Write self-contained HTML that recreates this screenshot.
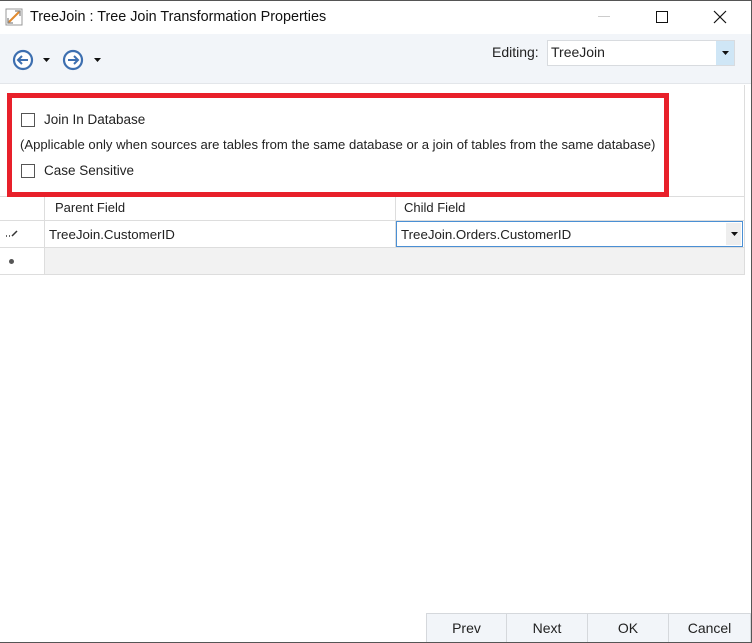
<!DOCTYPE html>
<html><head><meta charset="utf-8"><style>
*{box-sizing:border-box;margin:0;padding:0}
body{width:752px;height:643px;overflow:hidden;background:#fff;font-family:"Liberation Sans",sans-serif;font-size:13px;color:#222;position:relative}
.abs{position:absolute}
.win{position:absolute;left:0;top:0;width:752px;height:643px;border-top:1px solid #555;border-right:1px solid #555;border-bottom:1px solid #666}
.title{left:30px;top:9px;font-size:14.4px;color:#111}
.tb{left:0;top:34px;width:751px;height:50px;background:#f2f5f9;border-bottom:1px solid #e3e6ea}
.cb{width:14px;height:14px;border:1px solid #555;background:#fff}
.btn{top:613px;height:30px;background:#f2f5f9;border:1px solid #d5d8dc;text-align:center;line-height:28px;font-size:14px;color:#222}
</style></head><body>
<div class="win"></div>
<svg class="abs" style="left:5px;top:8px" width="18" height="18" viewBox="0 0 18 18">
<rect x="1" y="1" width="16" height="16" fill="#fff" stroke="#999"/>
<path d="M3 15 L15 3" stroke="#e08a30" stroke-width="2"/>
<path d="M10 3h5v5" fill="none" stroke="#888" stroke-width="1.3"/>
<path d="M3 10v5h5" fill="none" stroke="#888" stroke-width="1.3"/>
</svg>
<div class="abs title">TreeJoin : Tree Join Transformation Properties</div>
<div class="abs" style="left:598px;top:16px;width:12px;height:1px;background:#ccc"></div>
<div class="abs" style="left:656px;top:11px;width:12px;height:12px;border:1.3px solid #111"></div>
<svg class="abs" style="left:713px;top:10px" width="14" height="14"><path d="M1 1L13 13M13 1L1 13" stroke="#111" stroke-width="1.2"/></svg>
<div class="abs tb"></div>
<svg class="abs" style="left:12px;top:49px" width="22" height="22" viewBox="0 0 22 22">
<circle cx="11" cy="11" r="9" fill="#fff" stroke="#3d6fb0" stroke-width="2.2"/>
<path d="M16 11H6M10 7L6 11L10 15" fill="none" stroke="#3d6fb0" stroke-width="2"/></svg>
<svg class="abs" style="left:43px;top:58px" width="7" height="4"><path d="M0 0H7L3.5 4Z" fill="#111"/></svg>
<svg class="abs" style="left:62px;top:49px" width="22" height="22" viewBox="0 0 22 22">
<circle cx="11" cy="11" r="9" fill="#fff" stroke="#3d6fb0" stroke-width="2.2"/>
<path d="M6 11H16M12 7L16 11L12 15" fill="none" stroke="#3d6fb0" stroke-width="2"/></svg>
<svg class="abs" style="left:94px;top:58px" width="7" height="4"><path d="M0 0H7L3.5 4Z" fill="#111"/></svg>
<div class="abs" style="left:492px;top:44px;font-size:14px;color:#222">Editing:</div>
<div class="abs" style="left:547px;top:40px;width:188px;height:26px;background:#fff;border:1px solid #d8dbdf"></div>
<div class="abs" style="left:551px;top:44px;font-size:14px">TreeJoin</div>
<div class="abs" style="left:716px;top:41px;width:18px;height:24px;background:#cfe6f6"></div>
<svg class="abs" style="left:722px;top:51px" width="7" height="4"><path d="M0 0H7L3.5 4Z" fill="#111"/></svg>
<div class="abs" style="left:0;top:85px;width:745px;height:112px;border-right:1px solid #ddd;border-bottom:1px solid #ddd"></div>
<div class="abs" style="left:7px;top:93px;width:662px;height:104px;border:5px solid #e8202a"></div>
<div class="abs cb" style="left:21px;top:113px"></div>
<div class="abs" style="left:44px;top:112px;font-size:13.5px">Join In Database</div>
<div class="abs" style="left:20px;top:137px;font-size:13.1px">(Applicable only when sources are tables from the same database or a join of tables from the same database)</div>
<div class="abs cb" style="left:21px;top:164px"></div>
<div class="abs" style="left:44px;top:163px;font-size:13.5px">Case Sensitive</div>
<div class="abs" style="left:0;top:197px;width:745px;height:78px;border-right:1px solid #ddd"></div>
<div class="abs" style="left:44px;top:197px;width:1px;height:78px;background:#ddd"></div>
<div class="abs" style="left:395px;top:197px;width:1px;height:78px;background:#ddd"></div>
<div class="abs" style="left:0;top:220px;width:745px;height:1px;background:#ddd"></div>
<div class="abs" style="left:0;top:247px;width:745px;height:1px;background:#ddd"></div>
<div class="abs" style="left:0;top:274px;width:745px;height:1px;background:#ddd"></div>
<div class="abs" style="left:45px;top:248px;width:699px;height:26px;background:#f2f2f2"></div>
<div class="abs" style="left:55px;top:200px;font-size:13px">Parent Field</div>
<div class="abs" style="left:404px;top:200px;font-size:13px">Child Field</div>
<div class="abs" style="left:49px;top:227px;font-size:13.3px">TreeJoin.CustomerID</div>
<div class="abs" style="left:396px;top:221px;width:347px;height:26px;border:1px solid #4a8fd4"></div>
<div class="abs" style="left:401px;top:227px;font-size:13.3px">TreeJoin.Orders.CustomerID</div>
<div class="abs" style="left:726px;top:223px;width:15px;height:22px;background:#eee"></div>
<svg class="abs" style="left:731px;top:232px" width="7" height="4"><path d="M0 0H7L3.5 4Z" fill="#111"/></svg>
<svg class="abs" style="left:5px;top:230px" width="14" height="8"><path d="M1 6h1M4 6h1M7 6L12 1" stroke="#333" stroke-width="1.5"/></svg>
<div class="abs" style="left:9px;top:259px;width:5px;height:5px;border-radius:50%;background:#555"></div>
<div class="abs btn" style="left:426px;width:81px">Prev</div>
<div class="abs btn" style="left:506px;width:82px">Next</div>
<div class="abs btn" style="left:587px;width:82px">OK</div>
<div class="abs btn" style="left:668px;width:83px">Cancel</div>
<div class="abs" style="left:0;top:642px;width:752px;height:1px;background:#555"></div>
</body></html>
